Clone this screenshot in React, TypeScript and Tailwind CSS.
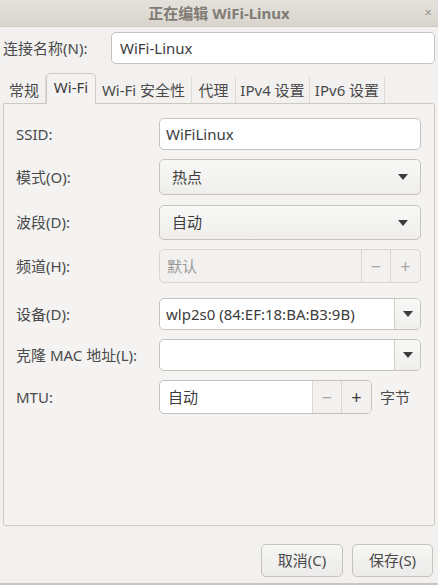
import type { ReactNode } from "react";

const FONT = { fontFamily: '"Noto Sans", "Noto Sans CJK SC", sans-serif' };

function Arrow() {
  return (
    <svg width="10" height="6" viewBox="0 0 10 6" className="shrink-0">
      <path d="M0 0h10L5 6z" fill="#3c3c3c" />
    </svg>
  );
}

function Row({ label, className, children }: { label: string; className: string; children: ReactNode }) {
  return (
    <div className={`flex items-center ${className}`}>
      <div className="w-[143px] shrink-0 text-[#4a4a4a]">{label}</div>
      {children}
    </div>
  );
}

function Combo({ value }: { value: string }) {
  return (
    <div className="flex h-full w-[262px] items-center justify-between rounded-[5px] border border-[#c6c2bd] bg-gradient-to-b from-[#f8f8f7] to-[#efeeec] pl-[12px] pr-[12px] text-[#3c3c3c]">
      <span>{value}</span>
      <Arrow />
    </div>
  );
}

function EntryCombo({ value }: { value: string }) {
  return (
    <div className="flex h-full w-[262px] overflow-hidden rounded-[5px] border border-[#c6c2bd] bg-white">
      <div className="flex flex-1 items-center pl-[6px] text-[#3c3c3c]">{value}</div>
      <div className="flex w-[26px] items-center justify-center border-l border-[#d2cec9] bg-gradient-to-b from-[#f8f8f7] to-[#efeeec]">
        <Arrow />
      </div>
    </div>
  );
}

const tabs = [
  { name: "常规", w: "w-[43px]" },
  { name: "Wi-Fi", w: "w-[50px]", active: true },
  { name: "Wi-Fi 安全性", w: "w-[96px]" },
  { name: "代理", w: "w-[44px]" },
  { name: "IPv4 设置", w: "w-[74px]" },
  { name: "IPv6 设置", w: "w-[75px]" },
];

export default function App() {
  return (
    <div className="flex h-[585px] w-[438px] flex-col bg-[#f2f1f0] text-[15px]" style={FONT}>
      {/* title bar */}
      <div className="relative flex h-[27px] shrink-0 items-center justify-center border-b border-[#cfcbc4] bg-gradient-to-b from-[#e4e1dc] to-[#d9d5ce]">
        <span className="text-[15px] font-bold text-[#807b75]">正在编辑 WiFi-Linux</span>
        <span className="absolute right-[6px] top-[3px] text-[13px] text-[#9a958f]">×</span>
      </div>

      <div className="flex flex-1 flex-col px-[3px]">
        {/* name row */}
        <div className="mt-[5px] flex h-[32px] items-center">
          <div className="w-[108px] shrink-0 text-[#4a4a4a]">连接名称(N):</div>
          <div className="flex h-full flex-1 items-center rounded-[5px] border border-[#c6c2bd] bg-white pl-[8px] text-[#3c3c3c]">
            WiFi-Linux
          </div>
        </div>

        {/* tabs */}
        <div className="relative z-10 mt-[8px] flex h-[31px] items-end">
          {tabs.map((t) =>
            t.active ? (
              <div
                key={t.name}
                className={`${t.w} -mb-px flex h-[31px] items-center justify-center rounded-t-[5px] border border-b-0 border-[#cdc8c2] bg-[#f4f3f2] pb-[3px] text-[#3c3c3c]`}
              >
                {t.name}
              </div>
            ) : (
              <div
                key={t.name}
                className={`${t.w} flex h-[27px] items-center justify-center border-r border-[#dedad5] pt-[1px] text-[#4a4a4a]`}
              >
                {t.name}
              </div>
            )
          )}
        </div>

        {/* panel */}
        <div className="flex h-[423px] w-[432px] flex-col rounded-[3px] rounded-tl-none border border-[#cdc8c2] bg-[#f4f3f2] pl-[12px] pt-[14px]">
          <Row label="SSID:" className="h-[32px]">
            <div className="flex h-full w-[262px] items-center rounded-[5px] border border-[#c6c2bd] bg-white pl-[6px] text-[#3c3c3c]">
              WiFiLinux
            </div>
          </Row>
          <Row label="模式(O):" className="mt-[9px] h-[36px]">
            <Combo value="热点" />
          </Row>
          <Row label="波段(D):" className="mt-[10px] h-[35px]">
            <Combo value="自动" />
          </Row>
          <Row label="频道(H):" className="mt-[9px] h-[34px]">
            <div className="flex h-full w-[262px] overflow-hidden rounded-[5px] border border-[#dad6d1] bg-[#f2f1f0]">
              <div className="flex flex-1 items-center pl-[7px] text-[#9a9896]">默认</div>
              <div className="flex w-[29px] items-center justify-center border-l border-[#dad6d1] text-[18px] text-[#a8a6a3]">−</div>
              <div className="flex w-[30px] items-center justify-center border-l border-[#dad6d1] text-[18px] text-[#a8a6a3]">+</div>
            </div>
          </Row>
          <Row label="设备(D):" className="mt-[15px] h-[32px]">
            <EntryCombo value="wlp2s0 (84:EF:18:BA:B3:9B)" />
          </Row>
          <Row label="克隆 MAC 地址(L):" className="mt-[9px] h-[32px]">
            <EntryCombo value="" />
          </Row>
          <Row label="MTU:" className="mt-[9px] h-[34px]">
            <div className="flex h-full w-[213px] overflow-hidden rounded-[5px] border border-[#c6c2bd] bg-white">
              <div className="flex flex-1 items-center pl-[8px] text-[#3c3c3c]">自动</div>
              <div className="flex w-[29px] items-center justify-center border-l border-[#dad6d1] bg-[#f2f1f0] text-[18px] text-[#a8a6a3]">−</div>
              <div className="flex w-[30px] items-center justify-center border-l border-[#dad6d1] bg-[#f2f1f0] text-[18px] text-[#3c3c3c]">+</div>
            </div>
            <span className="ml-[8px] text-[#4a4a4a]">字节</span>
          </Row>
        </div>

        {/* buttons */}
        <div className="mt-[18px] flex justify-end gap-[9px] pr-[2px]">
          <button className="h-[33px] w-[82px] rounded-[5px] border border-[#c6c2bd] bg-gradient-to-b from-[#f6f6f5] to-[#ecebe9] text-[#4a4a4a]">
            取消(C)
          </button>
          <button className="h-[33px] w-[81px] rounded-[5px] border border-[#c6c2bd] bg-gradient-to-b from-[#f6f6f5] to-[#ecebe9] text-[#4a4a4a]">
            保存(S)
          </button>
        </div>
      </div>
      <div className="h-[2px] bg-[#c9c6c2]" />
    </div>
  );
}
